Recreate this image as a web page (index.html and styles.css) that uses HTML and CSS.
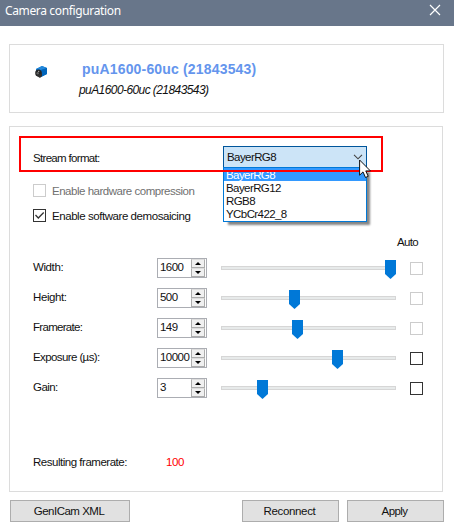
FILE: index.html
```html
<!DOCTYPE html>
<html lang="en">
<head>
<meta charset="utf-8">
<title>Camera configuration</title>
<link rel="stylesheet" href="styles.css">
</head>
<body>
<div class="window">
  <header class="titlebar">
    <span class="title">Camera configuration</span>
    <svg class="close" width="12" height="12" viewBox="0 0 12 12"><path d="M1 1L11 11M11 1L1 11" stroke="#fff" stroke-width="1.2"/></svg>
  </header>

  <section class="device">
    <svg class="camera" width="14" height="14" viewBox="0 0 14 14">
      <path d="M2 4L8 1L13 3V9L7 12L2 10Z" fill="#0873cf"/>
      <path d="M2 4L8 1L13 3L7 5Z" fill="#2388db"/>
      <path d="M7 5L13 3V9L7 12Z" fill="#0065bb"/>
      <ellipse cx="4.5" cy="8" rx="3.3" ry="3.5" fill="#252525"/>
      <path d="M4 10L8 8V11L6 13L3 11Z" fill="#303030"/>
      <circle cx="3.7" cy="8.2" r="1.2" fill="#666"/>
      <circle cx="4.7" cy="6.3" r=".6" fill="#ccc"/>
    </svg>
    <div class="names">
      <div class="name">puA1600-60uc (21843543)</div>
      <div class="subname">puA1600-60uc (21843543)</div>
    </div>
  </section>

  <main class="settings">
    <div class="stream">
      <span class="label t-stream">Stream format:</span>
      <div class="combo">
        <span class="combo-text">BayerRG8</span>
        <svg width="10" height="6" viewBox="0 0 10 6"><path d="M1 .8L5 4.8L9 .8" fill="none" stroke="#444" stroke-width="1.1"/></svg>
        <ul class="options">
          <li class="selected">BayerRG8</li>
          <li>BayerRG12</li>
          <li>RGB8</li>
          <li>YCbCr422_8</li>
        </ul>
      </div>
      <div class="highlight"></div>
      <svg class="cursor" width="13" height="20" viewBox="0 0 13 20"><path d="M.6 1V16.2L4 12.9L6.5 18.5L9.2 17.3L6.8 11.9H11.4Z" fill="#fff" stroke="#111" stroke-width="1"/></svg>
    </div>

    <div class="option disabled"><span class="box"></span><span class="t-hard">Enable hardware compression</span></div>
    <div class="option"><span class="box"><svg width="11" height="11" viewBox="0 0 11 11"><path d="M1.5 5L4.3 8L9.7 2.5" fill="none" stroke="#333" stroke-width="1.3"/></svg></span><span class="t-soft">Enable software demosaicing</span></div>

    <div class="auto">Auto</div>

    <div class="row"><span class="label t-width">Width:</span><div class="spin"><span>1600</span><div class="arrows"><i class="up"></i><i class="down"></i></div></div><div class="slider"><b class="thumb" style="left:164px"></b></div><span class="box off"></span></div>
    <div class="row"><span class="label t-width">Height:</span><div class="spin"><span>500</span><div class="arrows"><i class="up"></i><i class="down"></i></div></div><div class="slider"><b class="thumb" style="left:68px"></b></div><span class="box off"></span></div>
    <div class="row"><span class="label t-frame">Framerate:</span><div class="spin"><span>149</span><div class="arrows"><i class="up"></i><i class="down"></i></div></div><div class="slider"><b class="thumb" style="left:71px"></b></div><span class="box off"></span></div>
    <div class="row"><span class="label t-expo">Exposure (µs):</span><div class="spin"><span>10000</span><div class="arrows"><i class="up"></i><i class="down"></i></div></div><div class="slider"><b class="thumb" style="left:111px"></b></div><span class="box"></span></div>
    <div class="row"><span class="label t-gain">Gain:</span><div class="spin"><span>3</span><div class="arrows"><i class="up"></i><i class="down"></i></div></div><div class="slider"><b class="thumb" style="left:36px"></b></div><span class="box"></span></div>

    <div class="result"><span class="t-result">Resulting framerate:</span><span class="rate">100</span></div>
  </main>

  <footer class="actions">
    <button class="wide">GenICam XML</button>
    <button class="reconnect">Reconnect</button>
    <button class="apply">Apply</button>
  </footer>
</div>
</body>
</html>
```
FILE: styles.css
```css
* { box-sizing: border-box; }
body { margin: 0; background: #fff; color: #111; font: 11.5px/14px "Liberation Sans", Arial, sans-serif; }
.window { width: 454px; height: 532px; overflow: hidden; white-space: nowrap; }

.titlebar { height: 26px; background: #68768a; color: #fff; display: flex; align-items: center; justify-content: space-between; padding: 0 13px 4px 5px; }
.title { font: 12px/16px "Noto Sans", sans-serif; letter-spacing: -.36px; }
.close { margin-top: -2px; }

.device { width: 435px; height: 69px; margin: 18px 0 0 9px; border: 1px solid #dcdcdc; display: flex; padding: 16px 0 0 24px; }
.camera { margin-top: 4px; }
.names { margin-left: 31px; }
.name { color: #6495ed; font-weight: bold; font-size: 14px; line-height: 16px; margin-left: 3px; letter-spacing: .17px; }
.subname { font-size: 12px; font-style: italic; margin-top: 6px; letter-spacing: -.58px; }

.settings { width: 434px; height: 366px; margin: 13px 0 0 9px; border: 1px solid #dcdcdc; }
.stream { position: relative; height: 41px; display: flex; padding: 19px 0 0 23px; }
.label { flex: none; }
.stream .label { width: 190px; margin-top: 5px; }

.combo { position: relative; width: 144px; height: 22px; border: 1px solid #00559b; background: #cce4f7; display: flex; align-items: center; justify-content: space-between; padding: 0 3px 0 3px; letter-spacing: -.58px; }
.options { position: absolute; top: 20px; left: -1px; width: 144px; height: 55px; margin: 0; padding: 0; list-style: none; border: 1px solid #0078d7; background: #fff; line-height: 15px; box-shadow: 4px 4px 2px -1px rgba(0,0,0,.48); }
.options li { height: 13px; padding-left: 2px; }
.options .selected { background: #3399ff; color: #fff; }
.highlight { position: absolute; left: 9px; top: 9px; width: 364px; height: 36px; border: 2px solid red; }
.cursor { position: absolute; left: 349px; top: 32px; }

.option { display: flex; align-items: center; height: 13px; margin: 16px 0 0 23px; gap: 6px; }
.option + .option { margin-top: 12px; }
.disabled { color: #707070; }
.box { width: 13px; height: 13px; border: 1px solid #333; background: #fff; flex: none; display: block; }
.box svg { display: block; }
.disabled .box, .off { border-color: #ccc; }

.auto { margin: 13px 0 0 387px; letter-spacing: -.65px; }
.row { display: flex; align-items: center; height: 20px; margin: 10px 0 0 23px; }
.auto + .row { margin-top: 9px; }
.row .label { width: 124px; padding-bottom: 2px; }
.spin { width: 50px; height: 20px; border: 1px solid #abadb3; display: flex; justify-content: space-between; padding-left: 2px; line-height: 17px; letter-spacing: -.55px; }
.arrows { width: 15px; height: 18px; display: flex; flex-direction: column; flex: none; margin-left: -2px; padding-right: 1px; }
.arrows i { flex: 1; background: #f0f0f0; border: 1px solid #acacac; border-top-color: #ddd; display: flex; align-items: center; justify-content: center; }
.arrows i::before { content: ""; border: 3px solid transparent; }
.arrows .up::before { border-top: 0; border-bottom-color: #000; }
.arrows .down::before { border-bottom: 0; border-top-color: #000; }
.slider { position: relative; width: 175px; height: 4px; margin: 0 14px; border: 1px solid #d6d6d6; background: #e7eaea; }
.thumb { position: absolute; top: -7px; margin-left: -1px; width: 11px; height: 19px; background: #0078d7; clip-path: polygon(0 0, 100% 0, 100% 74%, 50% 100%, 0 74%); }

.result { display: flex; margin: 57px 0 0 23px; }
.t-result { width: 133px; letter-spacing: -.48px; }
.rate { color: red; letter-spacing: -.4px; }

.actions { display: flex; margin: 8px 0 0 10px; width: 434px; }
button { height: 22px; padding: 0; border: 1px solid #adadad; border-radius: 0; background: #e1e1e1; color: #111; font: inherit; width: 97px; }
.wide { width: 120px; margin-right: auto; padding-right: 2px; letter-spacing: -.5px; }
.reconnect { margin-right: 8px; padding-right: 2px; letter-spacing: -.35px; }
.apply { padding-right: 2px; letter-spacing: -.6px; }

.t-stream { letter-spacing: -.68px; }
.t-hard { letter-spacing: -.48px; }
.t-soft { letter-spacing: -.44px; }
.t-width { letter-spacing: -.4px; }
.t-gain { letter-spacing: -.55px; }
.t-frame { letter-spacing: -.7px; }
.t-expo { letter-spacing: -.6px; }
```
